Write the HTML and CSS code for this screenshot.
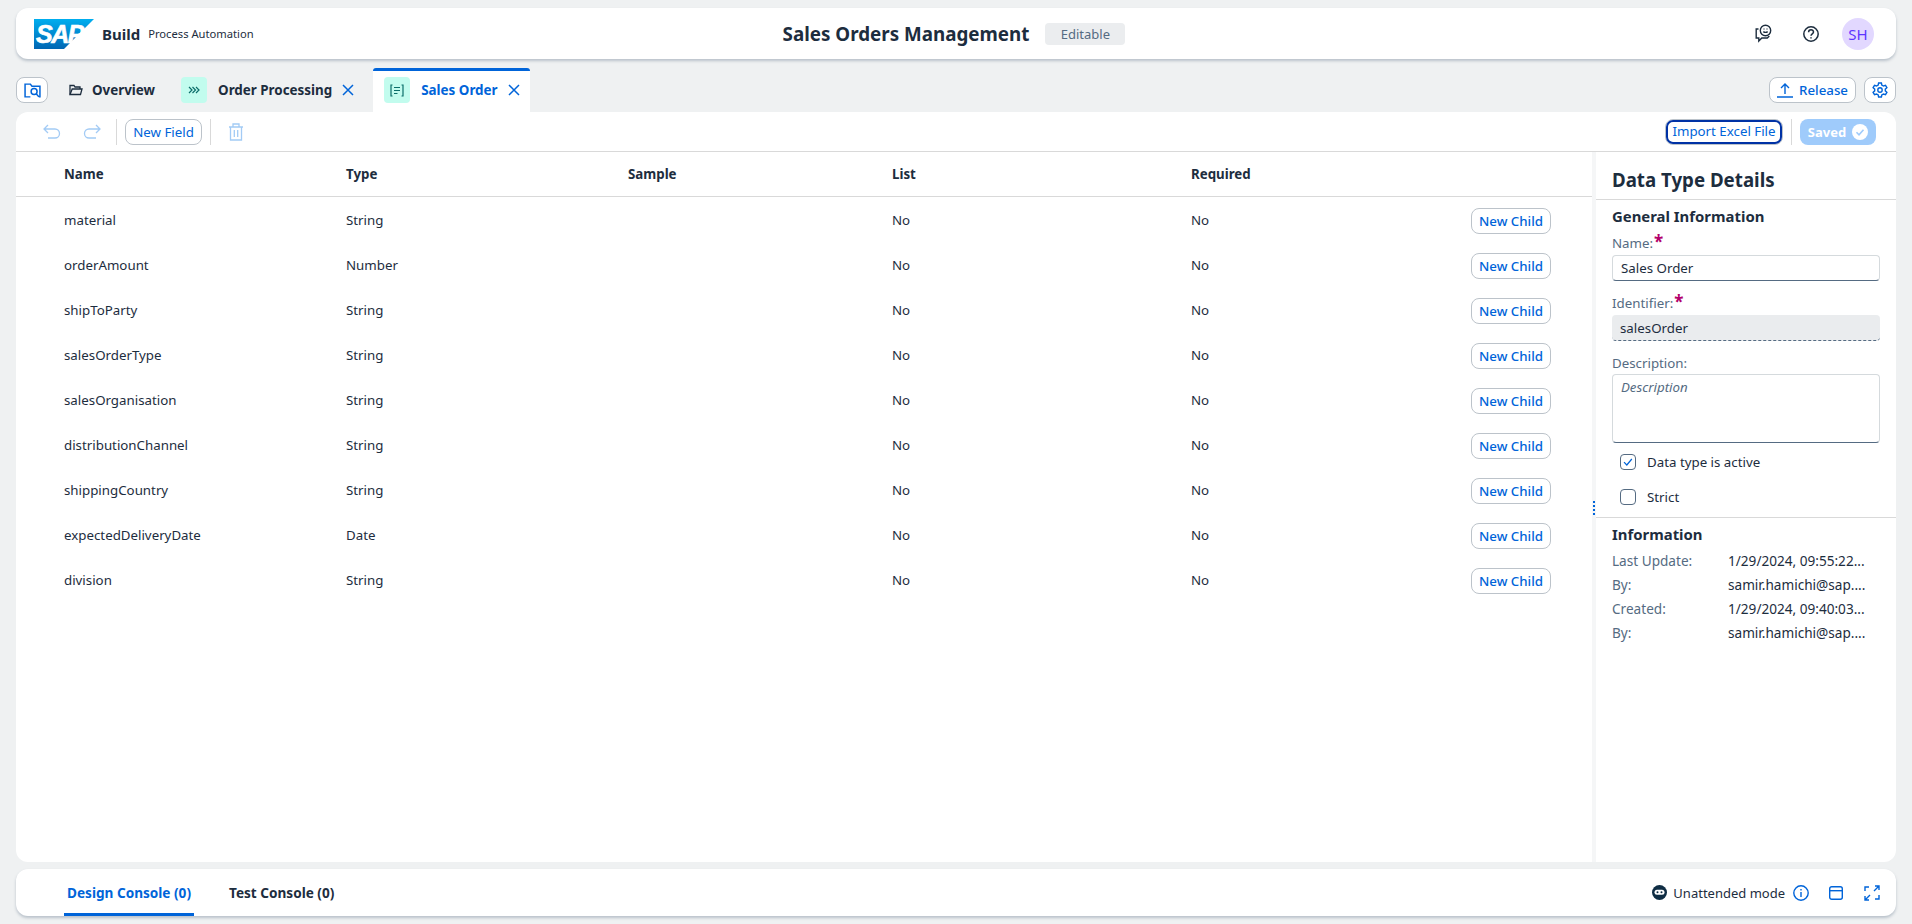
FILE: index.html
```html
<!DOCTYPE html>
<html lang="en">
<head>
    <meta charset="UTF-8">
    <title>Sales Orders Management</title>
    <link rel="stylesheet" href="styles.css">
</head>
<body>

<!-- Shell bar -->
<header class="shell card">
    <div class="shell-left">
        <div class="sap-logo">
            <svg width="60" height="30" viewBox="0 0 60 30">
                <defs>
                    <linearGradient id="sapBlue" x1="0" y1="0" x2="0" y2="1">
                        <stop offset="0" stop-color="#00aeef"/>
                        <stop offset="1" stop-color="#0066b3"/>
                    </linearGradient>
                </defs>
                <polygon points="0,0 60,0 30,30 0,30" fill="url(#sapBlue)"/>
            </svg>
            <span class="sap-logo-text">SAP</span>
        </div>
        <span class="shell-build">Build</span>
        <span class="shell-product">Process Automation</span>
    </div>
    <div class="shell-center">
        <span class="shell-title">Sales Orders Management</span>
        <span class="chip-editable">Editable</span>
    </div>
    <div class="shell-right">
        <svg class="icon-feedback" width="20" height="20" viewBox="0 0 20 20" fill="none" stroke="#1d2d3e" stroke-width="1.4">
            <circle cx="11.5" cy="6.5" r="5.2"/>
            <path d="M9.4 7.5c.9 1.2 3.3 1.2 4.2 0M9.6 5h.8M12.6 5h.8"/>
            <path d="M4.5 5H2.2v9h2.6v3l3-3h5.5l2-2"/>
        </svg>
        <svg class="icon-help" width="18" height="18" viewBox="0 0 18 18" fill="none" stroke="#1d2d3e" stroke-width="1.5">
            <circle cx="9" cy="9" r="7.2"/>
            <path d="M6.6 7.2c0-3.1 4.9-3.1 4.9-.1 0 1.9-2.5 1.8-2.5 3.7"/>
            <path d="M9 12.2v1.4"/>
        </svg>
        <div class="avatar">SH</div>
    </div>
</header>

<!-- Tabs -->
<nav class="tabs">
    <button class="btn btn-search">
        <svg width="17" height="17" viewBox="0 0 16 16" fill="none" stroke="#0064d9" stroke-width="1.4">
            <path d="M6 14H1V2h5l1.500 2H15v10h-1"/>
            <circle cx="9.500" cy="9" r="2.800"/>
            <path d="M11.500 11l2.500 3"/>
        </svg>
    </button>
    <div class="tab tab-overview">
        <svg width="14" height="12" viewBox="0 0 14 12" fill="none" stroke="#1d2d3e" stroke-width="1.3">
            <path d="M1 10.500V1.500h4l1 1.500h5v2"/>
            <path d="M1 10.500h10.500l1.500-5.500H3.200z"/>
        </svg>
        <span class="tab-label">Overview</span>
    </div>
    <div class="tab tab-process">
        <div class="tab-chip">
            <svg width="12" height="8" viewBox="0 0 12 8" fill="none" stroke="#0b6e6a" stroke-width="1.2">
                <path d="M1 1l3 3-3 3M4.500 1l3 3-3 3M8 1l3 3-3 3"/>
            </svg>
        </div>
        <span class="tab-label">Order Processing</span>
        <svg class="tab-close" width="12" height="12" viewBox="0 0 12 12" stroke="#0064d9" stroke-width="1.5">
            <path d="M1 1l10 10M11 1L1 11"/>
        </svg>
    </div>
    <div class="tab tab-active">
        <div class="tab-chip">
            <svg width="14" height="13" viewBox="0 0 14 13" fill="none" stroke="#0b6e6a" stroke-width="1.2">
                <path d="M2.500 1H1v11h1.500M11.500 1H13v11h-1.500M4 3.500h6M4 6.500h6M4 9.500h3.500"/>
            </svg>
        </div>
        <span class="tab-label">Sales Order</span>
        <svg class="tab-close" width="12" height="12" viewBox="0 0 12 12" stroke="#0064d9" stroke-width="1.5">
            <path d="M1 1l10 10M11 1L1 11"/>
        </svg>
    </div>
    <div class="tabs-actions">
        <button class="btn btn-release">
            <svg width="16" height="16" viewBox="0 0 16 16" fill="none" stroke="#0064d9" stroke-width="1.4">
                <path d="M8 12V2M4 6l4-4 4 4M0 15h16"/>
            </svg>
            Release
        </button>
        <button class="btn btn-gear">
            <svg width="16" height="16" viewBox="0 0 16 16" fill="none" stroke="#0064d9" stroke-width="1.4">
                <path d="M6.600 1h2.800l.4 2 1.700 1 2-.7 1.400 2.400-1.600 1.400v1.800l1.600 1.400-1.400 2.400-2-.7-1.700 1-.4 2H6.600l-.4-2-1.700-1-2 .7-1.400-2.400 1.600-1.400V7.100L1.100 5.700l1.400-2.400 2 .7 1.700-1z"/>
                <circle cx="8" cy="8" r="2.200"/>
            </svg>
        </button>
    </div>
</nav>

<!-- Editor -->
<main class="editor">
    <div class="toolbar">
        <svg class="tool-undo" width="18" height="16" viewBox="0 0 18 16" fill="none" stroke="#a3cbf5" stroke-width="1.3">
            <path d="M5 1L1 5l4 4M1 5h11a4.500 4.500 0 0 1 0 9H5"/>
        </svg>
        <svg class="tool-redo" width="18" height="16" viewBox="0 0 18 16" fill="none" stroke="#a3cbf5" stroke-width="1.3">
            <path d="M13 1l4 4-4 4M17 5H6a4.500 4.500 0 0 0 0 9h7"/>
        </svg>
        <span class="tool-sep"></span>
        <button class="btn btn-small">New Field</button>
        <span class="tool-sep"></span>
        <svg class="tool-trash" width="16" height="18" viewBox="0 0 16 18" fill="none" stroke="#a3cbf5" stroke-width="1.3">
            <path d="M1 4h14M5 4V1h6v3M2.500 4v13h11V4M6.300 7v7M9.700 7v7"/>
        </svg>
        <div class="toolbar-right">
            <button class="btn btn-small btn-focus"><span>Import Excel File</span></button>
            <span class="tool-sep"></span>
            <div class="saved">
                Saved
                <svg width="16" height="16" viewBox="0 0 16 16">
                    <circle cx="8" cy="8" r="8" fill="#fff"/>
                    <path d="M4.500 8.300l2.500 2.500 4.500-5" fill="none" stroke="#9fcbfb" stroke-width="1.600"/>
                </svg>
            </div>
        </div>
    </div>

    <div class="editor-body">
        <section class="fields">
            <div class="row row-head">
                <span>Name</span><span>Type</span><span>Sample</span><span>List</span><span>Required</span>
            </div>
            <div class="row"><span>material</span><span>String</span><span></span><span>No</span><span>No</span><button class="btn btn-child">New Child</button></div>
            <div class="row"><span>orderAmount</span><span>Number</span><span></span><span>No</span><span>No</span><button class="btn btn-child">New Child</button></div>
            <div class="row"><span>shipToParty</span><span>String</span><span></span><span>No</span><span>No</span><button class="btn btn-child">New Child</button></div>
            <div class="row"><span>salesOrderType</span><span>String</span><span></span><span>No</span><span>No</span><button class="btn btn-child">New Child</button></div>
            <div class="row"><span>salesOrganisation</span><span>String</span><span></span><span>No</span><span>No</span><button class="btn btn-child">New Child</button></div>
            <div class="row"><span>distributionChannel</span><span>String</span><span></span><span>No</span><span>No</span><button class="btn btn-child">New Child</button></div>
            <div class="row"><span>shippingCountry</span><span>String</span><span></span><span>No</span><span>No</span><button class="btn btn-child">New Child</button></div>
            <div class="row"><span>expectedDeliveryDate</span><span>Date</span><span></span><span>No</span><span>No</span><button class="btn btn-child">New Child</button></div>
            <div class="row"><span>division</span><span>String</span><span></span><span>No</span><span>No</span><button class="btn btn-child">New Child</button></div>
        </section>

        <div class="splitter"><span class="splitter-dots"></span></div>

        <aside class="details">
            <h2 class="details-title">Data Type Details</h2>
            <div class="details-general">
                <h3 class="details-heading">General Information</h3>
                <label class="field-label">Name:<span class="req">*</span></label>
                <div class="input">Sales Order</div>
                <label class="field-label">Identifier:<span class="req">*</span></label>
                <div class="input input-readonly">salesOrder</div>
                <label class="field-label label-desc">Description:</label>
                <div class="input input-area">Description</div>
                <div class="check">
                    <span class="check-box">
                        <svg width="16" height="16" viewBox="0 0 16 16" fill="none" stroke="#0064d9" stroke-width="1.2">
                            <path d="M4 8.200l2.800 2.800L11.800 5"/>
                        </svg>
                    </span>
                    Data type is active
                </div>
                <div class="check"><span class="check-box"></span>Strict</div>
            </div>
            <div class="details-info">
                <h3 class="details-heading">Information</h3>
                <div class="info-row"><span class="info-key">Last Update:</span><span class="info-val">1/29/2024, 09:55:22...</span></div>
                <div class="info-row"><span class="info-key">By:</span><span class="info-val">samir.hamichi@sap....</span></div>
                <div class="info-row"><span class="info-key">Created:</span><span class="info-val">1/29/2024, 09:40:03...</span></div>
                <div class="info-row"><span class="info-key">By:</span><span class="info-val">samir.hamichi@sap....</span></div>
            </div>
        </aside>
    </div>
</main>

<!-- Console -->
<footer class="console card">
    <div class="console-tab console-tab-active">Design Console (0)</div>
    <div class="console-tab">Test Console (0)</div>
    <div class="console-right">
        <svg class="icon-bot" width="15" height="15" viewBox="0 0 15 15">
            <circle cx="7.500" cy="7.500" r="7.500" fill="#0f2d44"/>
            <rect x="2.500" y="4.800" width="10" height="5" rx="2.500" fill="#fff"/>
            <circle cx="5.500" cy="7.300" r="1" fill="#0f2d44"/>
            <circle cx="9.500" cy="7.300" r="1" fill="#0f2d44"/>
        </svg>
        <span class="console-mode">Unattended mode</span>
        <svg class="icon-info" width="16" height="16" viewBox="0 0 16 16" fill="none" stroke="#0064d9" stroke-width="1.400">
            <circle cx="8" cy="8" r="7.200"/>
            <path d="M8 7v5M8 4v1.500"/>
        </svg>
        <svg class="icon-window" width="14" height="14" viewBox="0 0 14 14" fill="none" stroke="#0064d9" stroke-width="1.400">
            <rect x=".7" y=".7" width="12.600" height="12.600" rx="2"/>
            <path d="M.7 4.700h12.600"/>
        </svg>
        <svg class="icon-expand" width="16" height="16" viewBox="0 0 16 16" fill="none" stroke="#0064d9" stroke-width="1.400">
            <path d="M1 6V2h4M10 6l5-5M11 1h4v4M6 10l-5 5M1 11v4h4M15 10v4h-4"/>
        </svg>
    </div>
</footer>

</body>
</html>
```

FILE: styles.css
```css
* {
    margin: 0;
    padding: 0;
    box-sizing: border-box;
}

html, body {
    height: 100%;
    overflow: hidden;
}

body {
    font-family: "Noto Sans", "Open Sans", Arial, sans-serif;
    font-size: 14px;
    color: #1d2d3e;
    background-color: #eff1f2;
    padding: 8px 16px;
    display: flex;
    flex-direction: column;
}

.card {
    background-color: #fff;
    border-radius: 12px;
    box-shadow: 0 2px 3px rgba(85, 107, 130, 0.35);
}

/* Shell bar */
.shell {
    height: 51px;
    flex-shrink: 0;
    display: grid;
    grid-template-columns: 1fr auto 1fr;
    align-items: center;
    padding: 0 22px 0 18px;
}

.shell-left {
    display: flex;
    align-items: center;
}

.sap-logo {
    position: relative;
    width: 60px;
    height: 30px;
    margin-right: 8px;
}

.sap-logo-text {
    position: absolute;
    left: 2px;
    top: 0;
    font-family: "Liberation Sans", Arial, sans-serif;
    font-size: 25px;
    line-height: 30px;
    font-weight: 700;
    font-style: italic;
    letter-spacing: -1.5px;
    color: #fff;
    -webkit-text-stroke: 0.6px #fff;
}

.shell-build {
    font-size: 15px;
    font-weight: 700;
    margin-right: 8px;
}

.shell-product {
    font-size: 11.2px;
}

.shell-center {
    display: flex;
    align-items: center;
    gap: 16px;
}

.shell-title {
    font-size: 18.8px;
    font-weight: 700;
}

.chip-editable {
    width: 80px;
    height: 22px;
    line-height: 22px;
    text-align: center;
    background-color: #ebedef;
    border-radius: 4px;
    color: #556b82;
    font-size: 13px;
}

.shell-right {
    display: flex;
    align-items: center;
    justify-content: flex-end;
}

.icon-feedback {
    margin-right: 28px;
}

.icon-help {
    margin-right: 22px;
}

.avatar {
    width: 32px;
    height: 32px;
    border-radius: 50%;
    background-color: #e2d8ff;
    color: #5d36ff;
    font-size: 15px;
    line-height: 32px;
    text-align: center;
}

/* Buttons */
.btn {
    font-family: inherit;
    font-size: 13.3px;
    color: #0064d9;
    background-color: #fff;
    border: 1px solid #bcc3ca;
    border-radius: 8px;
    display: flex;
    align-items: center;
    justify-content: center;
}

.btn-search {
    width: 32px;
    height: 26px;
}

.btn-small {
    width: 77px;
    height: 26px;
    margin-right: 8px;
}

.btn-release {
    width: 87px;
    height: 26px;
    gap: 6px;
    font-weight: 500;
}

.btn-gear {
    width: 32px;
    height: 26px;
}

.btn-child {
    width: 80px;
    height: 26px;
    margin-top: 2px;
    font-weight: 500;
}

.btn-focus {
    width: 118px;
}

.btn-focus span {
    display: block;
    width: 116px;
    height: 24px;
    line-height: 19px;
    border: 2px solid #0032a5;
    border-radius: 7px;
}

/* Tabs */
.tabs {
    height: 44px;
    margin-top: 9px;
    flex-shrink: 0;
    display: flex;
    align-items: center;
}

.tab {
    height: 44px;
    display: flex;
    align-items: center;
    font-weight: 700;
}

.tab-label {
    font-size: 13.4px;
}

.tab-overview {
    margin-left: 21px;
    gap: 9px;
}

.tab-process {
    margin-left: 26px;
    margin-right: 19px;
}

.tab-chip {
    width: 26px;
    height: 26px;
    background-color: #c2fcee;
    border-radius: 4px;
    display: flex;
    align-items: center;
    justify-content: center;
    margin-right: 11px;
}

.tab-close {
    margin-left: 10px;
}

.tab-active {
    width: 157px;
    padding-left: 11px;
    background-color: #fff;
    border-top: 3px solid #0064d9;
    border-radius: 3px 3px 0 0;
    color: #0064d9;
}

.tab-active .tab-chip, .tab-active .tab-label, .tab-active .tab-close {
    margin-top: -3px;
}

.tabs-actions {
    margin-left: auto;
    display: flex;
    gap: 8px;
}

/* Editor */
.editor {
    flex: 1;
    min-height: 0;
    background-color: #fff;
    border-radius: 12px;
    display: flex;
    flex-direction: column;
}

.toolbar {
    height: 40px;
    flex-shrink: 0;
    border-bottom: 1px solid #d9d9d9;
    display: flex;
    align-items: center;
    padding-left: 27px;
    padding-right: 20px;
}

.tool-undo {
    margin-right: 22px;
}

.tool-redo {
    margin-right: 15px;
}

.tool-sep {
    width: 1px;
    height: 26px;
    background-color: #d9d9d9;
    margin-right: 8px;
}

.tool-trash {
    margin-left: 9px;
}

.toolbar-right {
    margin-left: auto;
    display: flex;
    align-items: center;
}

.saved {
    width: 76px;
    height: 26px;
    background-color: #9fcbfb;
    border-radius: 8px;
    color: #fff;
    font-size: 13px;
    font-weight: 700;
    display: flex;
    align-items: center;
    justify-content: center;
    gap: 6px;
}

.editor-body {
    flex: 1;
    min-height: 0;
    display: flex;
}

.fields {
    flex: 1;
}

.row {
    height: 45px;
    display: grid;
    grid-template-columns: 282px 282px 264px 299px 1fr 80px;
    align-items: center;
    padding: 0 41px 0 48px;
    font-size: 13.3px;
}

.row-head {
    font-weight: 700;
    border-bottom: 1px solid #d9d9d9;
}

.splitter {
    width: 4px;
    background-color: #f5f6f7;
    position: relative;
}

.splitter-dots {
    position: absolute;
    left: 1px;
    top: 349px;
    height: 14px;
    border-left: 2px dotted #0064d9;
}

/* Details panel */
.details {
    width: 300px;
    flex-shrink: 0;
}

.details-title {
    font-size: 18.7px;
    font-weight: 700;
    height: 48px;
    line-height: 55px;
    padding-left: 16px;
    border-bottom: 1px solid #d9d9d9;
}

.details-general {
    padding: 0 16px;
    border-bottom: 1px solid #d9d9d9;
    height: 313px;
}

.details-heading {
    font-size: 14.9px;
    font-weight: 700;
    line-height: 22px;
}

.details-general .details-heading {
    margin-top: 5px;
    margin-bottom: 7px;
}

.field-label {
    display: block;
    height: 18px;
    line-height: 18px;
    color: #556b82;
    font-size: 13.3px;
}

.field-label + .input {
    margin-top: 3px;
}

.input + .field-label {
    margin-top: 13px;
}

.label-desc + .input {
    margin-top: 2px;
}

.req {
    color: #b3006b;
    font-weight: 700;
    font-size: 17px;
    line-height: 14px;
    margin-left: 1px;
}

.input {
    height: 26px;
    line-height: 24px;
    padding-left: 8px;
    border: 1px solid #d5dadd;
    border-bottom: 1px solid #556b82;
    border-radius: 4px;
    font-size: 13.3px;
}

.input-readonly {
    background-color: #eaecee;
    border: none;
    border-bottom: 1px dashed #556b82;
    line-height: 26px;
}

.input-area {
    height: 69px;
    font-style: italic;
    color: #556b82;
}

.check {
    height: 35px;
    display: flex;
    align-items: center;
    font-size: 13.3px;
    padding-left: 8px;
    gap: 11px;
}

.input-area + .check {
    margin-top: 1px;
}

.check-box {
    width: 16px;
    height: 16px;
    border: 1px solid #556b82;
    border-radius: 4px;
    display: block;
}

.check-box svg {
    display: block;
    margin: -1px;
}

.details-info {
    padding: 5px 16px 0;
}

.info-row {
    height: 24px;
    display: flex;
    align-items: center;
    font-size: 13.6px;
}

.details-heading + .info-row {
    margin-top: 3px;
}

.info-key {
    width: 116px;
    color: #556b82;
}

/* Console */
.console {
    height: 47px;
    margin-top: 7px;
    flex-shrink: 0;
    display: flex;
    align-items: center;
    padding: 0 16px 0 48px;
}

.console-tab {
    height: 47px;
    line-height: 47px;
    font-size: 13.6px;
    font-weight: 700;
    padding: 0 3px;
    margin-right: 32px;
}

.console-tab-active {
    color: #0064d9;
    border-bottom: 3px solid #0064d9;
}

.console-right {
    margin-left: auto;
    display: flex;
    align-items: center;
}

.console-mode {
    margin-left: 6px;
    font-size: 13px;
}

.icon-info {
    margin-left: 8px;
}

.icon-window {
    margin-left: 20px;
}

.icon-expand {
    margin-left: 21px;
}
```
